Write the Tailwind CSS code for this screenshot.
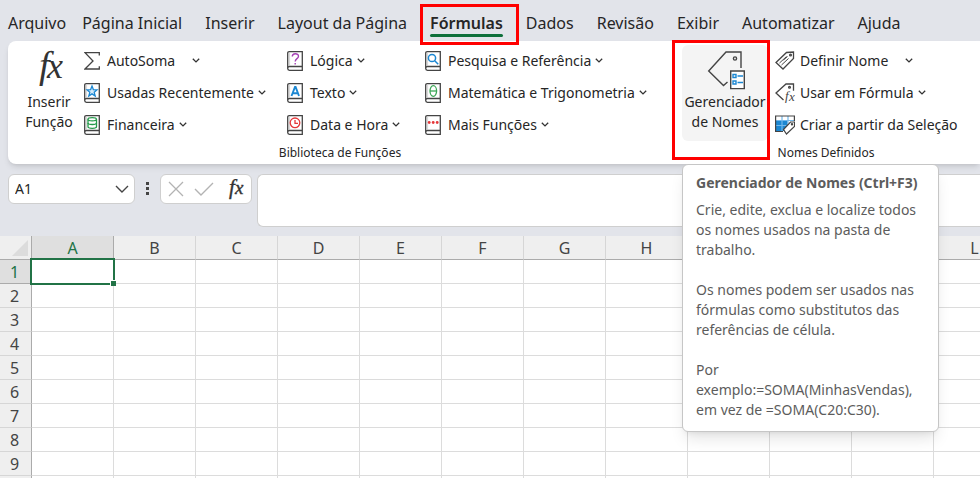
<!DOCTYPE html>
<html lang="pt-BR">
  <head>
    <meta charset="UTF-8" />
    <meta name="viewport" content="width=device-width, initial-scale=1.0" />
    <title>Fórmulas - Gerenciador de Nomes</title>
    <script src="https://cdn.jsdelivr.net/npm/@tailwindcss/browser@4"></script>
  </head>
  <body
    class="h-screen overflow-hidden flex flex-col bg-[#e2e4ea] font-['Noto_Sans','Open_Sans',sans-serif] text-sm text-[#262626]"
  >
    <!-- shared icons -->
    <svg class="hidden">
      <symbol id="book" viewBox="0 0 16 20">
        <path d="M15.300 15.500V.7H2.200Q.7.7.7 2.200v15.300q0 1.800 1.800 1.800h12.800v-3.800H2.400Q.7 15.500.7 17.400" fill="#fff" stroke="#444" stroke-width="1.300" />
        <path d="M2.600 1.500v13.500" stroke="#bbb" stroke-width=".6" />
      </symbol>
      <symbol id="chevron" viewBox="0 0 8 6">
        <path d="M.8.7 4 3.900 7.200.7" fill="none" stroke="#333" stroke-width="1.3" />
      </symbol>
    </svg>

    <nav class="h-[41px] shrink-0 flex items-center gap-[23px] pl-2 pt-1 text-base whitespace-nowrap">
      <button class="-mr-[7px]">Arquivo</button>
      <button>Página Inicial</button>
      <button>Inserir</button>
      <button>Layout da Página</button>
      <button class="relative font-semibold">
        Fórmulas
        <span class="absolute inset-x-0 -bottom-[2px] h-[3px] rounded-full bg-[#0f703b]"></span>
        <span class="absolute z-10 -left-[10px] -right-4 -top-[7px] -bottom-[10px] border-3 border-[#ff0000]"></span>
      </button>
      <button>Dados</button>
      <button>Revisão</button>
      <button>Exibir</button>
      <button>Automatizar</button>
      <button>Ajuda</button>
    </nav>

    <div class="h-[123px] shrink-0 ml-2 flex bg-white rounded-l-lg shadow-md whitespace-nowrap">
      <section class="flex-1 flex flex-col pt-1">
        <div class="flex">
          <button class="w-[70px] ml-[6px] h-24 flex flex-col items-center leading-5">
            <svg class="w-9 h-9 mt-[6px] mb-[5px] overflow-visible" viewBox="0 0 36 36" font-family="Liberation Serif" font-style="italic" fill="#333">
              <text x="8" y="27" font-size="38">f</text>
              <text x="16" y="27" font-size="36">x</text>
            </svg>
            Inserir<br />Função
          </button>
          <div class="w-[203px] flex flex-col">
            <button class="h-8 flex items-center gap-[7px]">
              <svg class="w-4 h-5" viewBox="0 0 16 20"><path d="M15.300 4.500V1.700H1L9 10 1 18h14.300v-2.800" fill="none" stroke="#444" stroke-width="1.3" /></svg>
              AutoSoma
              <svg class="w-2 h-[6px] ml-[10px]"><use href="#chevron" /></svg>
            </button>
            <button class="h-8 flex items-center gap-[7px]">
              <svg class="w-4 h-5"><use href="#book" /><path d="m8 3 1.400 3.700 3.600.2-2.800 2.400 1 3.700L8 10.900l-3.200 2.100 1-3.700L3 6.900l3.600-.2z" fill="#d3eafa" stroke="#1b87d2" stroke-width="1.3" /></svg>
              Usadas Recentemente
              <svg class="w-2 h-[6px] -ml-[3px]"><use href="#chevron" /></svg>
            </button>
            <button class="h-8 flex items-center gap-[7px]">
              <svg class="w-4 h-5"><use href="#book" /><g fill="#fff" stroke="#259a4b" stroke-width="1.300"><path d="M4 4.200v7.600c0 2 8.500 2 8.500 0V4.200" /><ellipse cx="8.200" cy="4.200" rx="4.200" ry="1.600" /><path d="M4 8c0 2 8.500 2 8.500 0" fill="none" /></g></svg>
              Financeira
              <svg class="w-2 h-[6px] -ml-[3px]"><use href="#chevron" /></svg>
            </button>
          </div>
          <div class="w-[138px] flex flex-col">
            <button class="h-8 flex items-center gap-[7px]">
              <svg class="w-4 h-5"><use href="#book" /><path d="M5.300 5.600C5.300 1.800 11.500 2 11.500 5.200c0 2.500-3.300 2.400-3.300 5.300M8.200 12v1.500" fill="none" stroke="#a541b5" stroke-width="1.4" /></svg>
              Lógica
              <svg class="w-2 h-[6px] -ml-[3px]"><use href="#chevron" /></svg>
            </button>
            <button class="h-8 flex items-center gap-[7px]">
              <svg class="w-4 h-5"><use href="#book" /><path d="M4.500 13 8 4h.6L12 13M5.800 10.200h5" fill="none" stroke="#1b87d2" stroke-width="1.900" /></svg>
              Texto
              <svg class="w-2 h-[6px] -ml-[3px]"><use href="#chevron" /></svg>
            </button>
            <button class="h-8 flex items-center gap-[7px]">
              <svg class="w-4 h-5"><use href="#book" /><g fill="#fff" stroke="#e5383b" stroke-width="1.3"><circle cx="8" cy="7.800" r="4.800" /><path d="M8 5v3.300h3" /></g></svg>
              Data e Hora
              <svg class="w-2 h-[6px] -ml-[3px]"><use href="#chevron" /></svg>
            </button>
          </div>
          <div class="flex flex-col">
            <button class="h-8 flex items-center gap-[7px]">
              <svg class="w-4 h-5"><use href="#book" /><g fill="#fff" stroke="#1b87d2" stroke-width="1.500"><circle cx="7" cy="7" r="3.600" /><path d="m9.700 9.700 3.500 3.500" /></g></svg>
              Pesquisa e Referência
              <svg class="w-2 h-[6px] -ml-[3px]"><use href="#chevron" /></svg>
            </button>
            <button class="h-8 flex items-center gap-[7px]">
              <svg class="w-4 h-5"><use href="#book" /><g fill="#fff" stroke="#3aa655" stroke-width="1.300"><ellipse cx="8.300" cy="8" rx="3.300" ry="5.300" /><path d="M5 8h6.600" /></g></svg>
              Matemática e Trigonometria
              <svg class="w-2 h-[6px] -ml-[3px]"><use href="#chevron" /></svg>
            </button>
            <button class="h-8 flex items-center gap-[7px]">
              <svg class="w-4 h-5"><use href="#book" /><g fill="#e5383b"><circle cx="4.200" cy="7.500" r="1.400" /><circle cx="8.200" cy="7.500" r="1.400" /><circle cx="12.200" cy="7.500" r="1.400" /></g></svg>
              Mais Funções
              <svg class="w-2 h-[6px] -ml-[3px]"><use href="#chevron" /></svg>
            </button>
          </div>
        </div>
        <h2 class="text-xs leading-6 text-center">Biblioteca de Funções</h2>
      </section>

      <section class="w-[308px] relative flex flex-col pt-1">
        <span class="absolute left-0 top-[6px] bottom-[6px] w-px bg-[#d4d4d4]"></span>
        <span class="absolute z-10 left-0 -top-px w-[98px] h-[120px] border-3 border-[#ff0000]"></span>
        <div class="flex">
          <button class="w-[86px] h-24 ml-[10px] flex flex-col items-center rounded-md bg-[#f4f4f4] leading-5">
            <svg class="w-10 h-10 mt-[5px] mb-[2px]" viewBox="0 0 40 40" fill="none" stroke="#444" stroke-width="1.4">
              <path d="M22.500 32 18.500 35.500 3.700 21 21 2h15v16" />
              <circle cx="30" cy="8.500" r="1.600" />
              <path d="M25.700 21h13.600v17.600H25.700z" fill="#fff" />
              <path d="M28 24.500h3v3h-3zM28 31h3v3h-3zM32.500 26H38M32.500 32.500H38" stroke="#1b87d2" />
            </svg>
            <span>Gerenciador<br />de Nomes</span>
          </button>
          <div class="ml-[7px] flex flex-col">
            <button class="h-8 flex items-center gap-[5px]">
              <svg class="w-5 h-5" viewBox="0 0 20 20" fill="none" stroke="#444" stroke-width="1.3">
                <path d="M1 11.500 11.500 1.500l7-.5v6.500L8 18z" />
                <circle cx="15.500" cy="4" r=".9" />
                <path d="m4.500 12 7-6.500M6.500 14l7-6.500M8.500 9l4-3.500" stroke-width="1" />
              </svg>
              Definir Nome
              <svg class="w-2 h-[6px] ml-3"><use href="#chevron" /></svg>
            </button>
            <button class="h-8 flex items-center gap-[5px]">
              <svg class="w-5 h-5 overflow-visible" viewBox="0 0 20 20" fill="none" stroke="#444" stroke-width="1.3">
                <path d="M8.500 17 1 10 11 1l7.500-.2v7" />
                <circle cx="14.500" cy="4.300" r=".9" />
                <g font-family="Liberation Serif" font-style="italic" fill="#444" stroke="none"><text x="10" y="17" font-size="13">f</text><text x="14" y="18" font-size="13">x</text></g>
              </svg>
              Usar em Fórmula
              <svg class="w-2 h-[6px] -ml-px"><use href="#chevron" /></svg>
            </button>
            <button class="h-8 flex items-center gap-[5px]">
              <svg class="w-5 h-5" viewBox="0 0 20 20" fill="none" stroke="#444" stroke-width="1.2">
                <path d="M.6 5.500h12V16H.6z" fill="#1b87d2" stroke="none" />
                <path d="M.6 5.500h18.800M.6 10.500h11M7 1v15M13 1v7" stroke="#72b8eb" />
                <path d="M8 16.500H.6V1h18.800v5" />
                <path d="m8.500 14.500 7-7.500h4v4.500l-8 7.500z" fill="#fff" />
                <circle cx="17" cy="9.300" r=".6" />
              </svg>
              Criar a partir da Seleção
            </button>
          </div>
        </div>
        <h2 class="text-xs leading-6 text-center">Nomes Definidos</h2>

        <div class="absolute z-20 left-[10px] top-[123px] w-[257px] px-[13px] pt-2 pb-[11px] bg-white border border-[#c6c6c6] rounded-md shadow-lg whitespace-normal leading-5 text-[#5c5c5c]">
          <h3 class="font-bold mb-[7px] whitespace-nowrap">Gerenciador de Nomes (Ctrl+F3)</h3>
          <p class="mb-5">Crie, edite, exclua e localize todos<br />os nomes usados na pasta de<br />trabalho.</p>
          <p class="mb-5">Os nomes podem ser usados nas<br />fórmulas como substitutos das<br />referências de célula.</p>
          <p>Por<br />exemplo:=SOMA(MinhasVendas),<br />em vez de =SOMA(C20:C30).</p>
        </div>
      </section>
    </div>

    <div class="h-[72px] shrink-0 flex items-start pl-2 pt-[10px]">
      <div class="w-[127px] h-[30px] flex items-center bg-white border border-[#cfcfcf] rounded-md">
        <input id="namebox" aria-label="Caixa de nome" value="A1" class="min-w-0 flex-1 pl-[6px] outline-none" />
        <button aria-label="Abrir lista" class="mr-[5px]">
          <svg class="w-[14px] h-2" viewBox="0 0 14 8"><path d="m1 1 6 6 6-6" fill="none" stroke="#444" stroke-width="1.400" /></svg>
        </button>
      </div>
      <svg class="w-[25px] h-[30px]" viewBox="0 0 25 30"><path d="M11 8h3v3h-3zM11 13h3v3h-3zM11 18h3v3h-3z" fill="#444" /></svg>
      <div class="w-[92px] h-[30px] flex items-center justify-between px-[7px] bg-white border border-[#cfcfcf] rounded-md">
        <button aria-label="Cancelar"><svg class="w-4 h-4" viewBox="0 0 16 16"><path d="m1 1 14 14M15 1 1 15" stroke="#b3b3b3" stroke-width="1.300" /></svg></button>
        <button aria-label="Inserir"><svg class="w-5 h-4" viewBox="0 0 20 16"><path d="m1 8 6 6L19 2" fill="none" stroke="#b3b3b3" stroke-width="1.400" /></svg></button>
        <button aria-label="Inserir função">
          <svg class="w-5 h-6 overflow-visible" viewBox="0 0 20 24" font-family="Liberation Serif" font-style="italic" fill="#333" stroke="#333" stroke-width=".4"><text x="5" y="17" font-size="21">f</text><text x="11" y="17" font-size="19">x</text></svg>
        </button>
      </div>
      <textarea aria-label="Barra de fórmulas" class="flex-1 h-[53px] ml-[5px] resize-none bg-white border border-r-0 border-[#cfcfcf] rounded-l-md outline-none"></textarea>
    </div>

    <div class="flex-1 overflow-hidden bg-white">
      <table class="table-fixed w-[1016px] border-separate border-spacing-0 text-base text-[#444]">
        <thead>
          <tr id="cols">
            <th class="w-8 h-6 p-0 bg-[#efefef] border-r border-b border-[#ababab]">
              <svg class="w-4 h-4 ml-3" viewBox="0 0 16 16"><path d="M16 0v16H0z" fill="#dcdcdc" /></svg>
            </th>
          </tr>
        </thead>
        <tbody id="rows"></tbody>
      </table>
    </div>

    <script>
      const letters = "ABCDEFGHIJKL".split("");
      const cols = document.getElementById("cols");
      const rows = document.getElementById("rows");

      letters.forEach((letter) => {
        const th = document.createElement("th");
        th.className =
          letter === "A"
            ? "h-6 p-0 pt-px leading-[22px] font-normal bg-[#dfdfdf] text-[#217346] border-r border-b border-[#ababab]"
            : "h-6 p-0 pt-px leading-[22px] font-normal bg-[#efefef] border-r border-b border-r-[#d6d6d6] border-b-[#ababab]";
        th.textContent = letter;
        cols.appendChild(th);
      });

      for (let n = 1; n <= 10; n++) {
        const tr = document.createElement("tr");
        tr.innerHTML = `
          <th class="${
            n === 1
              ? "h-6 p-0 pt-px pr-[2px] leading-[22px] font-normal bg-[#dfdfdf] text-[#217346] border-r border-b border-[#ababab]"
              : "h-6 p-0 pt-px pr-[2px] leading-[22px] font-normal bg-[#efefef] border-r border-b border-r-[#ababab] border-b-[#d6d6d6]"
          }">${n < 10 ? n : ""}</th>
          ${letters
            .map((letter) =>
              letter + n === "A1"
                ? `<td class="relative h-6 p-0 border-r border-b border-[#dcdcdc]">
                    <span class="absolute -inset-[2px] border-2 border-[#217346]"></span>
                    <span class="absolute -right-[3px] -bottom-[3px] w-[6px] h-[6px] bg-[#217346] border-t border-l border-white"></span>
                  </td>`
                : `<td class="h-6 p-0 border-r border-b border-[#dcdcdc]"></td>`
            )
            .join("")}
        `;
        rows.appendChild(tr);
      }
    </script>
  </body>
</html>
